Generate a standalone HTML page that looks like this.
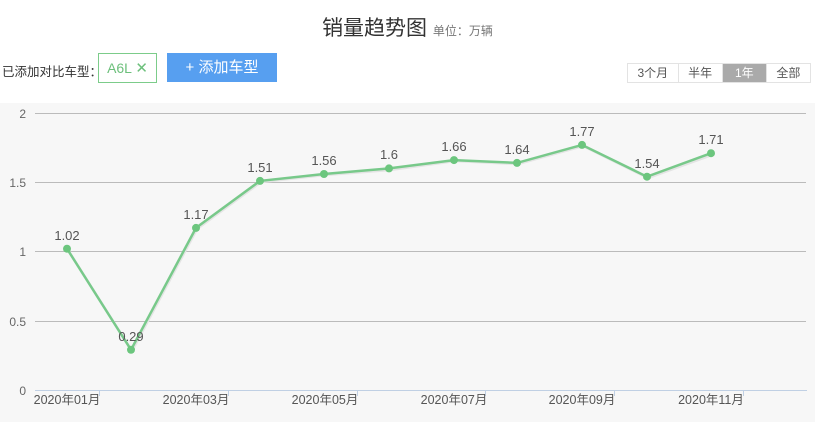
<!DOCTYPE html>
<html><head><meta charset="utf-8"><style>
body{margin:0;width:815px;height:426px;background:#fff;font-family:"Liberation Sans","Noto Sans CJK SC",sans-serif;position:relative;overflow:hidden}
.t{position:absolute;top:12px;left:0;width:815px;text-align:center;font-size:21px;color:#333}
.t span{font-size:12px;color:#777}
.lab{position:absolute;left:2px;top:61px;font-size:12.5px;color:#333}
.tag2{position:absolute;left:98px;top:53px;width:59px;height:30px;box-sizing:border-box;border:1px solid #7ccc8a;color:#6dc07c;font-size:14px;line-height:28px;text-align:center}
.tag2 b{font-weight:normal;font-size:15px}
.btn{position:absolute;left:167px;top:53px;width:110px;height:29px;background:#579ff0;color:#fff;font-size:15px;line-height:29px;text-align:center}
.rg{position:absolute;left:627px;top:63px;display:flex;border:1px solid #e3e3e3;width:182px}
.rg div{font-size:12px;color:#555;height:18px;line-height:18px;flex:1;text-align:center;border-left:1px solid #e3e3e3}
.rg div:first-child{border-left:0;flex:1.15}
.rg .a{background:#aaa;color:#fff}
svg{position:absolute;left:0;top:0}
</style></head><body>
<div class="t">销量趋势图 <span>单位：万辆</span></div>
<div class="lab">已添加对比车型：</div>
<div class="tag2">A6L <b>✕</b></div>
<div class="btn">+ 添加车型</div>
<div class="rg"><div>3个月</div><div>半年</div><div class="a">1年</div><div>全部</div></div>
<svg width="815" height="426" font-family="Liberation Sans,Noto Sans CJK SC,sans-serif">
<rect x="0" y="103" width="815" height="319" fill="#f7f7f7"/>
<g stroke="#bbb" stroke-width="1">
<line x1="35" y1="113.5" x2="806" y2="113.5"/><line x1="35" y1="182.5" x2="806" y2="182.5"/><line x1="35" y1="251.5" x2="806" y2="251.5"/><line x1="35" y1="321.5" x2="806" y2="321.5"/></g>
<line x1="35" y1="390.5" x2="807" y2="390.5" stroke="#c0d0e4"/>
<g stroke="#c0d0e4"><line x1="99.5" y1="390" x2="99.5" y2="396"/><line x1="228.5" y1="390" x2="228.5" y2="396"/><line x1="357.5" y1="390" x2="357.5" y2="396"/><line x1="485.5" y1="390" x2="485.5" y2="396"/><line x1="614.5" y1="390" x2="614.5" y2="396"/><line x1="743.5" y1="390" x2="743.5" y2="396"/></g>
<g font-size="12" fill="#666" text-anchor="end"><text x="26" y="118">2</text><text x="26" y="187">1.5</text><text x="26" y="256">1</text><text x="26" y="326">0.5</text><text x="26" y="395">0</text></g>
<g font-size="12.5" fill="#555" text-anchor="middle"><text x="67" y="404">2020年01月</text><text x="196" y="404">2020年03月</text><text x="325" y="404">2020年05月</text><text x="454" y="404">2020年07月</text><text x="582" y="404">2020年09月</text><text x="711" y="404">2020年11月</text></g>
<polyline fill="none" stroke="#e4e4e4" stroke-width="2.5" points="68,250 132,351 197,229 261,182 325,175 390,170 455,161 518,164 583,146 648,178 712,155"/>
<polyline fill="none" stroke="#78c98a" stroke-width="2.5" points="67,248.7 131,349.8 196,227.9 260,180.9 324,174 389,168.4 454,160.1 517,162.9 582,144.9 647,176.7 711,153.2"/>
<g fill="#6cc67e"><circle cx="67" cy="248.7" r="4"/><circle cx="131" cy="349.8" r="4"/><circle cx="196" cy="227.9" r="4"/><circle cx="260" cy="180.9" r="4"/><circle cx="324" cy="174" r="4"/><circle cx="389" cy="168.4" r="4"/><circle cx="454" cy="160.1" r="4"/><circle cx="517" cy="162.9" r="4"/><circle cx="582" cy="144.9" r="4"/><circle cx="647" cy="176.7" r="4"/><circle cx="711" cy="153.2" r="4"/></g>
<g font-size="13" fill="#555" text-anchor="middle"><text x="67" y="240">1.02</text><text x="131" y="341">0.29</text><text x="196" y="219">1.17</text><text x="260" y="172">1.51</text><text x="324" y="165">1.56</text><text x="389" y="159">1.6</text><text x="454" y="151">1.66</text><text x="517" y="154">1.64</text><text x="582" y="136">1.77</text><text x="647" y="168">1.54</text><text x="711" y="144">1.71</text></g>
</svg>
</body></html>
